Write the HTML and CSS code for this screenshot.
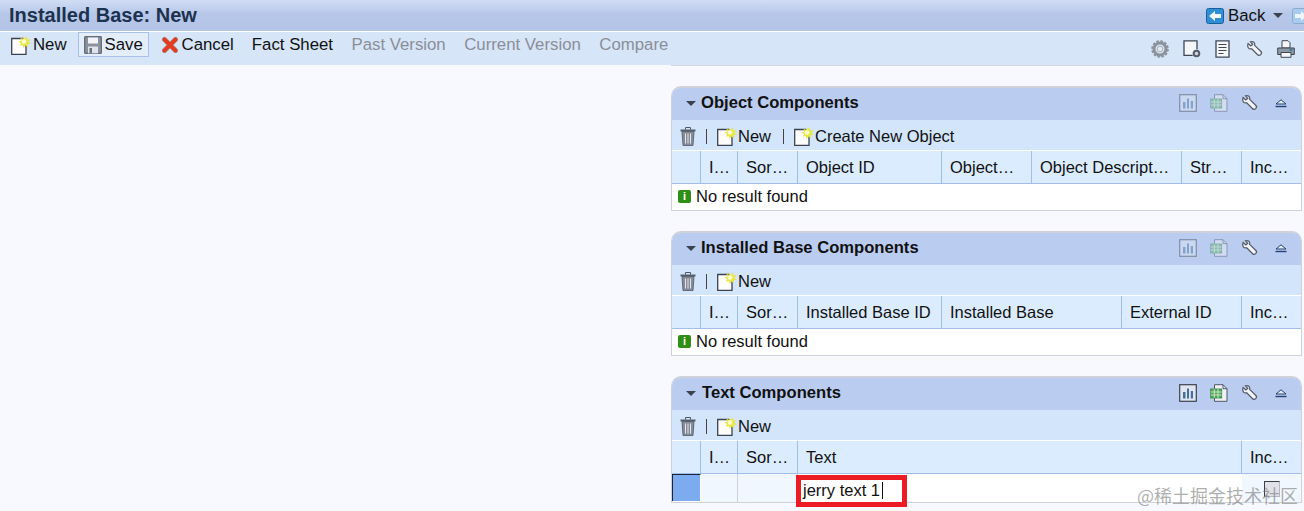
FILE: index.html
```html
<!DOCTYPE html>
<html lang="en">
  <head>
    <meta charset="UTF-8" />
    <meta name="viewport" content="width=device-width, initial-scale=1.0" />
    <title>Installed Base: New</title>
    <link rel="stylesheet" href="styles.css">
  </head>
  <body>
    <svg class="defs" width="0" height="0">
      <symbol id="i-new" viewBox="0 0 20 20">
        <path d="M.7 3.500h11l3.300 3.300v12.500H.7z" fill="#fdfdfd" stroke="#3b4250" stroke-width="1.300"/>
        <path d="M12.500.500l1 3 2.500-2 .3 3 3.200-.3-2 2.500 2.500 2-3.200.4.200 3.200-2.700-1.800-1.800 2.500-.8-3-3 .8 1.300-2.800-2.800-1.500 3-.8-.7-3 2.800 1.300z" fill="#e9e648"/>
        <circle cx="13" cy="6.500" r="2.300" fill="#fffdd0"/>
      </symbol>
      <symbol id="i-save" viewBox="0 0 18 18">
        <path d="M.7.700h16.600v16.600H.7z" fill="#8b929e" stroke="#4f5764"/>
        <path d="M4 1.500h10v6H4z" fill="#f2f4f7"/>
        <path d="M4 10.500h10v6.800H4z" fill="#dfe3ea"/>
        <path d="M5.500 12h2.500v5.300H5.500z" fill="#6a7280"/>
      </symbol>
      <symbol id="i-cancel" viewBox="0 0 16 16">
        <path d="M2.500 2.500l11 11M13.500 2.500l-11 11" stroke="#a8837c" stroke-width="5" stroke-linecap="round"/>
        <path d="M2.500 2.500l11 11M13.500 2.500l-11 11" stroke="#e8391f" stroke-width="3.600" stroke-linecap="round"/>
      </symbol>
      <symbol id="i-trash" viewBox="0 0 16 20">
        <path d="M.5 3.500h15v2H.5z" fill="#565e6b"/>
        <path d="M5.500 3.500V1.500h5v2" fill="none" stroke="#4f5764"/>
        <path d="M2 5.500h12l-1 14H3z" fill="#858c98" stroke="#4f5764" stroke-width=".8"/>
        <path d="M5.500 7.500v10M8 7.500v10M10.500 7.500v10" stroke="#e3e6ea"/>
      </symbol>
      <symbol id="i-chart" viewBox="0 0 18 18">
        <rect x=".7" y=".7" width="16.600" height="16.600" fill="#dfe6f2" stroke="#3b4350" stroke-width="1.200"/>
        <path d="M4 8h2.500v6.500H4zM8 4.500h2v10H8zM11.800 7h2.200v7.500h-2.200z" fill="#44709c"/>
      </symbol>
      <symbol id="i-sheet" viewBox="0 0 18 18">
        <path d="M4.500.700h8.500l4 4v12.600H4.500z" fill="#eef1f5" stroke="#4f5764"/>
        <path d="M13 .700v4h4" fill="none" stroke="#4f5764"/>
        <rect x=".7" y="5" width="11" height="9" fill="#56ab5c" stroke="#2f7f3c" stroke-width=".8"/>
        <path d="M.7 8h11M.7 11h11M4.300 5v9M8 5v9" stroke="#dff0dd" stroke-width=".8"/>
      </symbol>
      <symbol id="i-wrench" viewBox="0 -1 20 20">
        <path d="M2.300 3l3 2.600L7.500 3.800 5 1c3-1 5.400 1.200 4.600 4l7 6.800c1 1.200.6 2.700-.4 3.600-1 .8-2.400.9-3.300 0L6.300 8.800C3.300 9.600 .8 6.800 2.300 3z" fill="#f4f5f7" stroke="#565e6b" stroke-width="1.400"/>
      </symbol>
      <symbol id="i-gear" viewBox="0 0 18 18">
        <circle cx="9" cy="9" r="6" fill="none" stroke="#8b929c" stroke-width="3"/>
        <circle cx="9" cy="9" r="7.800" fill="none" stroke="#8b929c" stroke-width="2" stroke-dasharray="2.500 1.600"/>
        <circle cx="9" cy="9" r="2.800" fill="#e5e9ef" stroke="#a8aeb6"/>
      </symbol>
      <symbol id="i-docgear" viewBox="0 0 18 18">
        <path d="M1 .8h13v14.500H1z" fill="#f4f6f9" stroke="#3f4754" stroke-width="1.300"/>
        <circle cx="13.500" cy="13.500" r="4.300" fill="#d6e5f8"/>
        <circle cx="13.500" cy="13.500" r="2.800" fill="#d3d7dd" stroke="#565e6a" stroke-width="2"/>
      </symbol>
      <symbol id="i-list" viewBox="0 0 16 18">
        <path d="M1 .8h13v16.400H1z" fill="#f4f6f9" stroke="#3f4754" stroke-width="1.300"/>
        <path d="M3.500 4.500h8M3.500 7.500h8M3.500 10.500h8M3.500 13.500h5" stroke="#3f4754" stroke-width="1.200"/>
      </symbol>
      <symbol id="i-print" viewBox="0 0 18 18">
        <path d="M5 .7h6l2 2V8H5z" fill="#f5f6f8" stroke="#3f4754"/>
        <path d="M.7 8h16.600v6.500H.7z" fill="#8f98a5" stroke="#3f4754"/>
        <path d="M4 12.500h10v4.800H4z" fill="#f5f6f8" stroke="#3f4754"/>
        <path d="M12.500 10h3" stroke="#2c6fa8" stroke-width="1.400"/>
      </symbol>
      <symbol id="i-back" viewBox="0 0 18 16">
        <rect x=".5" y=".5" width="17" height="15" rx="2" fill="#2f8ed8" stroke="#1a5f98"/>
        <path d="M3 8l6-5v3h6v4H9v3z" fill="#f3f8fc"/>
      </symbol>
      <symbol id="i-forward" viewBox="0 0 18 16">
        <rect x=".5" y=".5" width="17" height="15" rx="2" fill="#a8cbee" stroke="#88abd2"/>
        <path d="M15 8l-6-5v3H3v4h6v3z" fill="#eef4fb"/>
      </symbol>
      <symbol id="i-collapse" viewBox="0 0 12 9">
        <path d="M6 .8L11 5H1z" fill="#e6ecf8" stroke="#24416f"/>
        <path d="M.5 7.500h11" stroke="#24416f" stroke-width="1.400"/>
      </symbol>
    </svg>

    <div class="title-bar">
      <h1 class="page-title">Installed Base: New</h1>
      <div class="nav">
        <svg class="nav-icon"><use href="#i-back"/></svg>
        <span class="nav-label">Back</span>
        <span class="caret nav-caret"></span>
        <svg class="nav-icon"><use href="#i-forward"/></svg>
      </div>
    </div>

    <div class="toolbar-row">
      <div class="toolbar">
        <span class="tool tool-new"><svg class="ico-new"><use href="#i-new"/></svg>New</span>
        <span class="tool tool-save"><svg class="ico-save"><use href="#i-save"/></svg>Save</span>
        <span class="tool tool-cancel"><svg class="ico-cancel"><use href="#i-cancel"/></svg>Cancel</span>
        <span class="tool">Fact Sheet</span>
        <span class="tool tool-off">Past Version</span>
        <span class="tool tool-off">Current Version</span>
        <span class="tool tool-off">Compare</span>
      </div>
      <div class="toolbar-right">
        <svg class="ico-18"><use href="#i-gear"/></svg>
        <svg class="ico-18"><use href="#i-docgear"/></svg>
        <svg class="ico-18"><use href="#i-list"/></svg>
        <svg class="ico-18"><use href="#i-wrench"/></svg>
        <svg class="ico-18"><use href="#i-print"/></svg>
      </div>
    </div>

    <div class="content">
      <section class="panel">
        <div class="panel-head">
          <span class="caret"></span>
          <h2 class="panel-title">Object Components</h2>
          <div class="panel-actions">
            <svg class="ico-18 is-dim"><use href="#i-chart"/></svg>
            <svg class="ico-18 is-dim"><use href="#i-sheet"/></svg>
            <svg class="ico-18"><use href="#i-wrench"/></svg>
            <svg class="ico-collapse"><use href="#i-collapse"/></svg>
          </div>
        </div>
        <div class="panel-tools">
          <svg class="ico-trash"><use href="#i-trash"/></svg>
          <span class="divider"></span>
          <span class="tool"><svg class="ico-new"><use href="#i-new"/></svg>New</span>
          <span class="divider divider-wide"></span>
          <span class="tool"><svg class="ico-new"><use href="#i-new"/></svg>Create New Object</span>
        </div>
        <div class="table-head cols-object">
          <div class="cell"></div>
          <div class="cell">I…</div>
          <div class="cell">Sor…</div>
          <div class="cell">Object ID</div>
          <div class="cell">Object…</div>
          <div class="cell">Object Descript…</div>
          <div class="cell">Str…</div>
          <div class="cell">Inc…</div>
        </div>
        <div class="empty-row"><span class="info-badge">i</span>No result found</div>
      </section>

      <section class="panel">
        <div class="panel-head">
          <span class="caret"></span>
          <h2 class="panel-title">Installed Base Components</h2>
          <div class="panel-actions">
            <svg class="ico-18 is-dim"><use href="#i-chart"/></svg>
            <svg class="ico-18 is-dim"><use href="#i-sheet"/></svg>
            <svg class="ico-18"><use href="#i-wrench"/></svg>
            <svg class="ico-collapse"><use href="#i-collapse"/></svg>
          </div>
        </div>
        <div class="panel-tools">
          <svg class="ico-trash"><use href="#i-trash"/></svg>
          <span class="divider"></span>
          <span class="tool"><svg class="ico-new"><use href="#i-new"/></svg>New</span>
        </div>
        <div class="table-head cols-base">
          <div class="cell"></div>
          <div class="cell">I…</div>
          <div class="cell">Sor…</div>
          <div class="cell">Installed Base ID</div>
          <div class="cell">Installed Base</div>
          <div class="cell">External ID</div>
          <div class="cell">Inc…</div>
        </div>
        <div class="empty-row"><span class="info-badge">i</span>No result found</div>
      </section>

      <section class="panel">
        <div class="panel-head">
          <span class="caret"></span>
          <h2 class="panel-title panel-title-text">Text Components</h2>
          <div class="panel-actions">
            <svg class="ico-18"><use href="#i-chart"/></svg>
            <svg class="ico-18"><use href="#i-sheet"/></svg>
            <svg class="ico-18"><use href="#i-wrench"/></svg>
            <svg class="ico-collapse"><use href="#i-collapse"/></svg>
          </div>
        </div>
        <div class="panel-tools">
          <svg class="ico-trash"><use href="#i-trash"/></svg>
          <span class="divider"></span>
          <span class="tool"><svg class="ico-new"><use href="#i-new"/></svg>New</span>
        </div>
        <div class="table-head cols-text">
          <div class="cell"></div>
          <div class="cell">I…</div>
          <div class="cell">Sor…</div>
          <div class="cell">Text</div>
          <div class="cell">Inc…</div>
        </div>
        <div class="data-row cols-text">
          <div class="cell row-select"></div>
          <div class="cell cell-tint"></div>
          <div class="cell cell-tint"></div>
          <div class="cell cell-input">
            <div class="text-input"><span>jerry text 1</span><i class="text-cursor"></i></div>
          </div>
          <div class="cell cell-tint cell-check"><span class="checkbox"></span></div>
        </div>
      </section>
    </div>

    <div class="watermark">@稀土掘金技术社区</div>
  </body>
</html>
```

FILE: styles.css
```css
html,
body {
  height: 511px;
  overflow: hidden;
}

body {
  margin: 0;
  position: relative;
  background-color: #f7f9fe;
  color: #111;
  font-family: "Liberation Sans", Arial, sans-serif;
  font-size: 16.5px;
}

.defs {
  display: block;
  height: 0;
}

/* title bar */
.title-bar {
  display: flex;
  justify-content: space-between;
  align-items: center;
  height: 31px;
  padding-left: 9px;
  background: linear-gradient(#d0dcf3, #b6c7e9 45%, #b3c4e6);
  border-bottom: 1px solid #fff;
}

.page-title {
  margin: 0;
  color: #1c324f;
  font-size: 20px;
  font-weight: bold;
}

.nav {
  display: flex;
  align-items: center;
  width: 98px;
  overflow: hidden;
  flex-shrink: 0;
  font-size: 16.8px;
}

.nav-icon {
  width: 18px;
  height: 16px;
  flex-shrink: 0;
}

.nav-label {
  margin-left: 4px;
}

.nav-caret {
  margin: 0 9px 0 8px;
  border-width: 4px 4px 0;
  flex-shrink: 0;
}

/* toolbar */
.toolbar-row {
  display: flex;
  justify-content: space-between;
  height: 33px;
  background-color: #d6e5f8;
  font-size: 16.8px;
}

.toolbar {
  display: flex;
  align-items: flex-start;
  padding-left: 11px;
}

.toolbar-right {
  display: flex;
  align-items: center;
  gap: 13.500px;
  width: 153px;
  padding-top: 1px;
  box-sizing: border-box;
}

.toolbar-row::after {
  content: "";
  position: absolute;
  left: 671px;
  right: 0;
  top: 65px;
  border-bottom: 1px solid #d3d6dc;
}

.tool {
  display: inline-flex;
  align-items: center;
  height: 25px;
  margin-right: 18.500px;
  white-space: nowrap;
}

.tool-new {
  margin-right: 11px;
}

.tool-save {
  box-sizing: border-box;
  width: 71px;
  padding-left: 5px;
  margin-right: 13px;
  background-color: #e4eefb;
  border: 1px solid #a9c1e8;
}

.tool-cancel {
  margin-right: 18px;
}

.tool-off {
  color: #8a8f97;
}

.ico-new {
  width: 20px;
  height: 20px;
  margin-right: 1px;
}

.toolbar .ico-new {
  margin-right: 2px;
}

.ico-save {
  width: 18px;
  height: 18px;
  margin-right: 3px;
}

.ico-cancel {
  width: 16px;
  height: 16px;
  margin-right: 4px;
}

.ico-18 {
  width: 18px;
  height: 18px;
  flex-shrink: 0;
}

/* panels */
.content {
  display: flex;
  flex-direction: column;
  gap: 20px;
  margin-left: 671px;
  margin-right: 2px;
  padding-top: 21px;
}

.panel {
  background-color: #fff;
  border: 1px solid #cfd2d8;
  border-top-width: 2px;
  border-radius: 10px 10px 0 0;
}

.panel-head {
  display: flex;
  align-items: center;
  box-sizing: border-box;
  height: 32px;
  padding: 0 14px 2px;
  background-color: #bacdf1;
  border-radius: 8px 8px 0 0;
}

.caret {
  width: 0;
  height: 0;
  border-style: solid;
  border-width: 5.500px 5.500px 0;
  border-color: #3a4250 transparent transparent;
}

.panel-title {
  margin: 0 0 0 5px;
  flex: 1;
  font-size: 16.600px;
  font-weight: bold;
}

.panel-title-text {
  margin-left: 6px;
}

.panel-actions {
  display: flex;
  align-items: center;
  gap: 13px;
}

.panel-actions .is-dim {
  opacity: 0.45;
}

.ico-collapse {
  width: 12px;
  height: 9px;
  margin-left: 3px;
}

.panel-tools {
  display: flex;
  align-items: center;
  box-sizing: border-box;
  height: 31px;
  padding: 2px 0 0 8px;
  background-color: #d2e5fb;
  border-bottom: 1px solid #fff;
}

.panel-tools .tool {
  margin-right: 0;
}

.ico-trash {
  width: 16px;
  height: 20px;
}

.divider {
  width: 1px;
  height: 15px;
  margin: 0 10px;
  background-color: #444;
}

.divider-wide {
  margin-left: 12px;
}

.table-head,
.data-row {
  display: grid;
}

.table-head {
  height: 32px;
  background-color: #dbecff;
  border-bottom: 1px solid #a3bde9;
}

.cols-object {
  grid-template-columns: 29px 37px 60px 144px 90px 150px 60px 1fr;
}

.cols-base {
  grid-template-columns: 29px 37px 60px 144px 180px 120px 1fr;
}

.cols-text {
  grid-template-columns: 29px 37px 60px 444px 1fr;
}

.table-head .cell {
  display: flex;
  align-items: center;
  padding-left: 8px;
  border-right: 1px solid #a3bde9;
  white-space: nowrap;
  overflow: hidden;
  box-sizing: border-box;
}

.table-head .cell:last-child {
  border-right: none;
}

.empty-row {
  display: flex;
  align-items: center;
  box-sizing: border-box;
  height: 26px;
  padding: 0 0 2px 6px;
}

.info-badge {
  display: flex;
  justify-content: center;
  align-items: center;
  width: 13px;
  height: 13px;
  margin-right: 5px;
  background-color: #2f8f14;
  border-radius: 2px;
  color: #fff;
  font-size: 11px;
  font-weight: bold;
}

.data-row {
  height: 28px;
}

.data-row .cell {
  box-sizing: border-box;
}

.row-select {
  margin-bottom: 1px;
  background-color: #7dabf0;
  border-top: 1px solid #1b2430;
  border-left: 1px solid #1b2430;
  border-right: 1px solid #fff;
}

.cell-tint {
  background-color: #f0f7ff;
  border-right: 1px solid #cfd2d8;
}

.cell-input {
  position: relative;
}

.text-input {
  position: absolute;
  left: -2px;
  top: 1px;
  display: flex;
  align-items: center;
  box-sizing: border-box;
  width: 111px;
  height: 32px;
  padding: 0 0 2px 2px;
  background-color: #fff;
  border: 5px solid #ec1c24;
}

.text-cursor {
  width: 1px;
  height: 17px;
  margin-left: 2px;
  background-color: #111;
}

.cell-check {
  display: flex;
  justify-content: center;
  padding-top: 7px;
  border-right: none;
}

.checkbox {
  width: 14px;
  height: 14px;
  background-color: #dfe0e8;
  border: 1px solid #3a3f48;
  border-bottom-color: #b5b8c0;
  border-right-color: #b5b8c0;
}

.watermark {
  position: absolute;
  right: 6px;
  top: 483px;
  color: rgba(120, 120, 120, 0.6);
  font-family: "Noto Sans CJK SC", sans-serif;
  font-size: 18px;
  line-height: 24px;
  white-space: nowrap;
}
```
